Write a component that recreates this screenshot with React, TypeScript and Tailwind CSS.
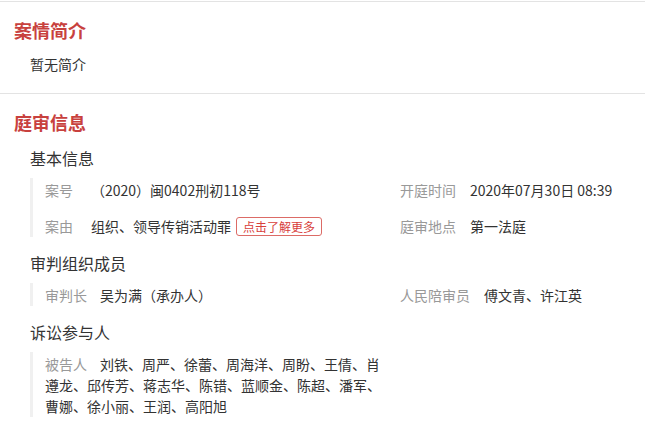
const FONT = "font-['Noto_Sans_CJK_SC','Noto_Sans',sans-serif]";

const PARTIES =
  "刘铁、周严、徐蕾、周海洋、周盼、王倩、肖遵龙、邱传芳、蒋志华、陈错、蓝顺金、陈超、潘军、曹娜、徐小丽、王润、高阳旭";

function SectionTitle({ children }: { children: string }) {
  return <h2 className="pl-[14px] text-[18px] font-bold leading-[24px] text-[#c8413e]">{children}</h2>;
}

function SubTitle({ children, className }: { children: string; className?: string }) {
  return <h3 className={`pl-[30px] text-[16px] leading-[22px] text-[#333] ${className ?? ""}`}>{children}</h3>;
}

function Block({ children }: { children: React.ReactNode }) {
  return (
    <div className="ml-[30px] mt-[9px] border-l-[3px] border-[#f0f0f0] pl-[12px]">{children}</div>
  );
}

export default function App() {
  return (
    <div className={`h-[432px] w-[645px] overflow-hidden bg-white text-[14px] text-[#333] ${FONT}`}>
      <div className="mt-px border-t border-[#e3e3e3]" />

      <section className="pb-[19px]">
        <div className="mt-[16px]">
          <SectionTitle>案情简介</SectionTitle>
        </div>
        <p className="mt-[12px] pl-[30px] leading-[20px]">暂无简介</p>
      </section>

      <div className="border-t border-[#e3e3e3]" />

      <section>
        <div className="mt-[16px]">
          <SectionTitle>庭审信息</SectionTitle>
        </div>

        <SubTitle className="mt-[13px]">基本信息</SubTitle>
        <Block>
          <div className="grid grid-cols-[355px_1fr] gap-y-[16px] pt-[2px] pb-px leading-[20px]">
            <div className="flex">
              <span className="w-[46px] shrink-0 text-[#999]">案号</span>
              <span>（2020）闽0402刑初118号</span>
            </div>
            <div className="flex">
              <span className="mr-[14px] text-[#999]">开庭时间</span>
              <span>2020年07月30日 08:39</span>
            </div>
            <div className="flex items-center">
              <span className="w-[46px] shrink-0 text-[#999]">案由</span>
              <span>组织、领导传销活动罪</span>
              <span className="ml-[5px] rounded-[3px] border border-[#dc6b66] px-[6px] text-[12px] leading-[17px] text-[#d8403b]">
                点击了解更多
              </span>
            </div>
            <div className="flex">
              <span className="mr-[14px] text-[#999]">庭审地点</span>
              <span>第一法庭</span>
            </div>
          </div>
        </Block>

        <SubTitle className="mt-[15px]">审判组织成员</SubTitle>
        <Block>
          <div className="grid grid-cols-[355px_1fr] pt-[2px] pb-px leading-[20px]">
            <div className="flex">
              <span className="mr-[13px] text-[#999]">审判长</span>
              <span>吴为满（承办人）</span>
            </div>
            <div className="flex">
              <span className="mr-[14px] text-[#999]">人民陪审员</span>
              <span>傅文青、许江英</span>
            </div>
          </div>
        </Block>

        <SubTitle className="mt-[15px]">诉讼参与人</SubTitle>
        <Block>
          <p className="w-[340px] pt-[2px] leading-[21px]">
            <span className="mr-[13px] text-[#999]">被告人</span>
            {PARTIES}
          </p>
        </Block>
      </section>
    </div>
  );
}
